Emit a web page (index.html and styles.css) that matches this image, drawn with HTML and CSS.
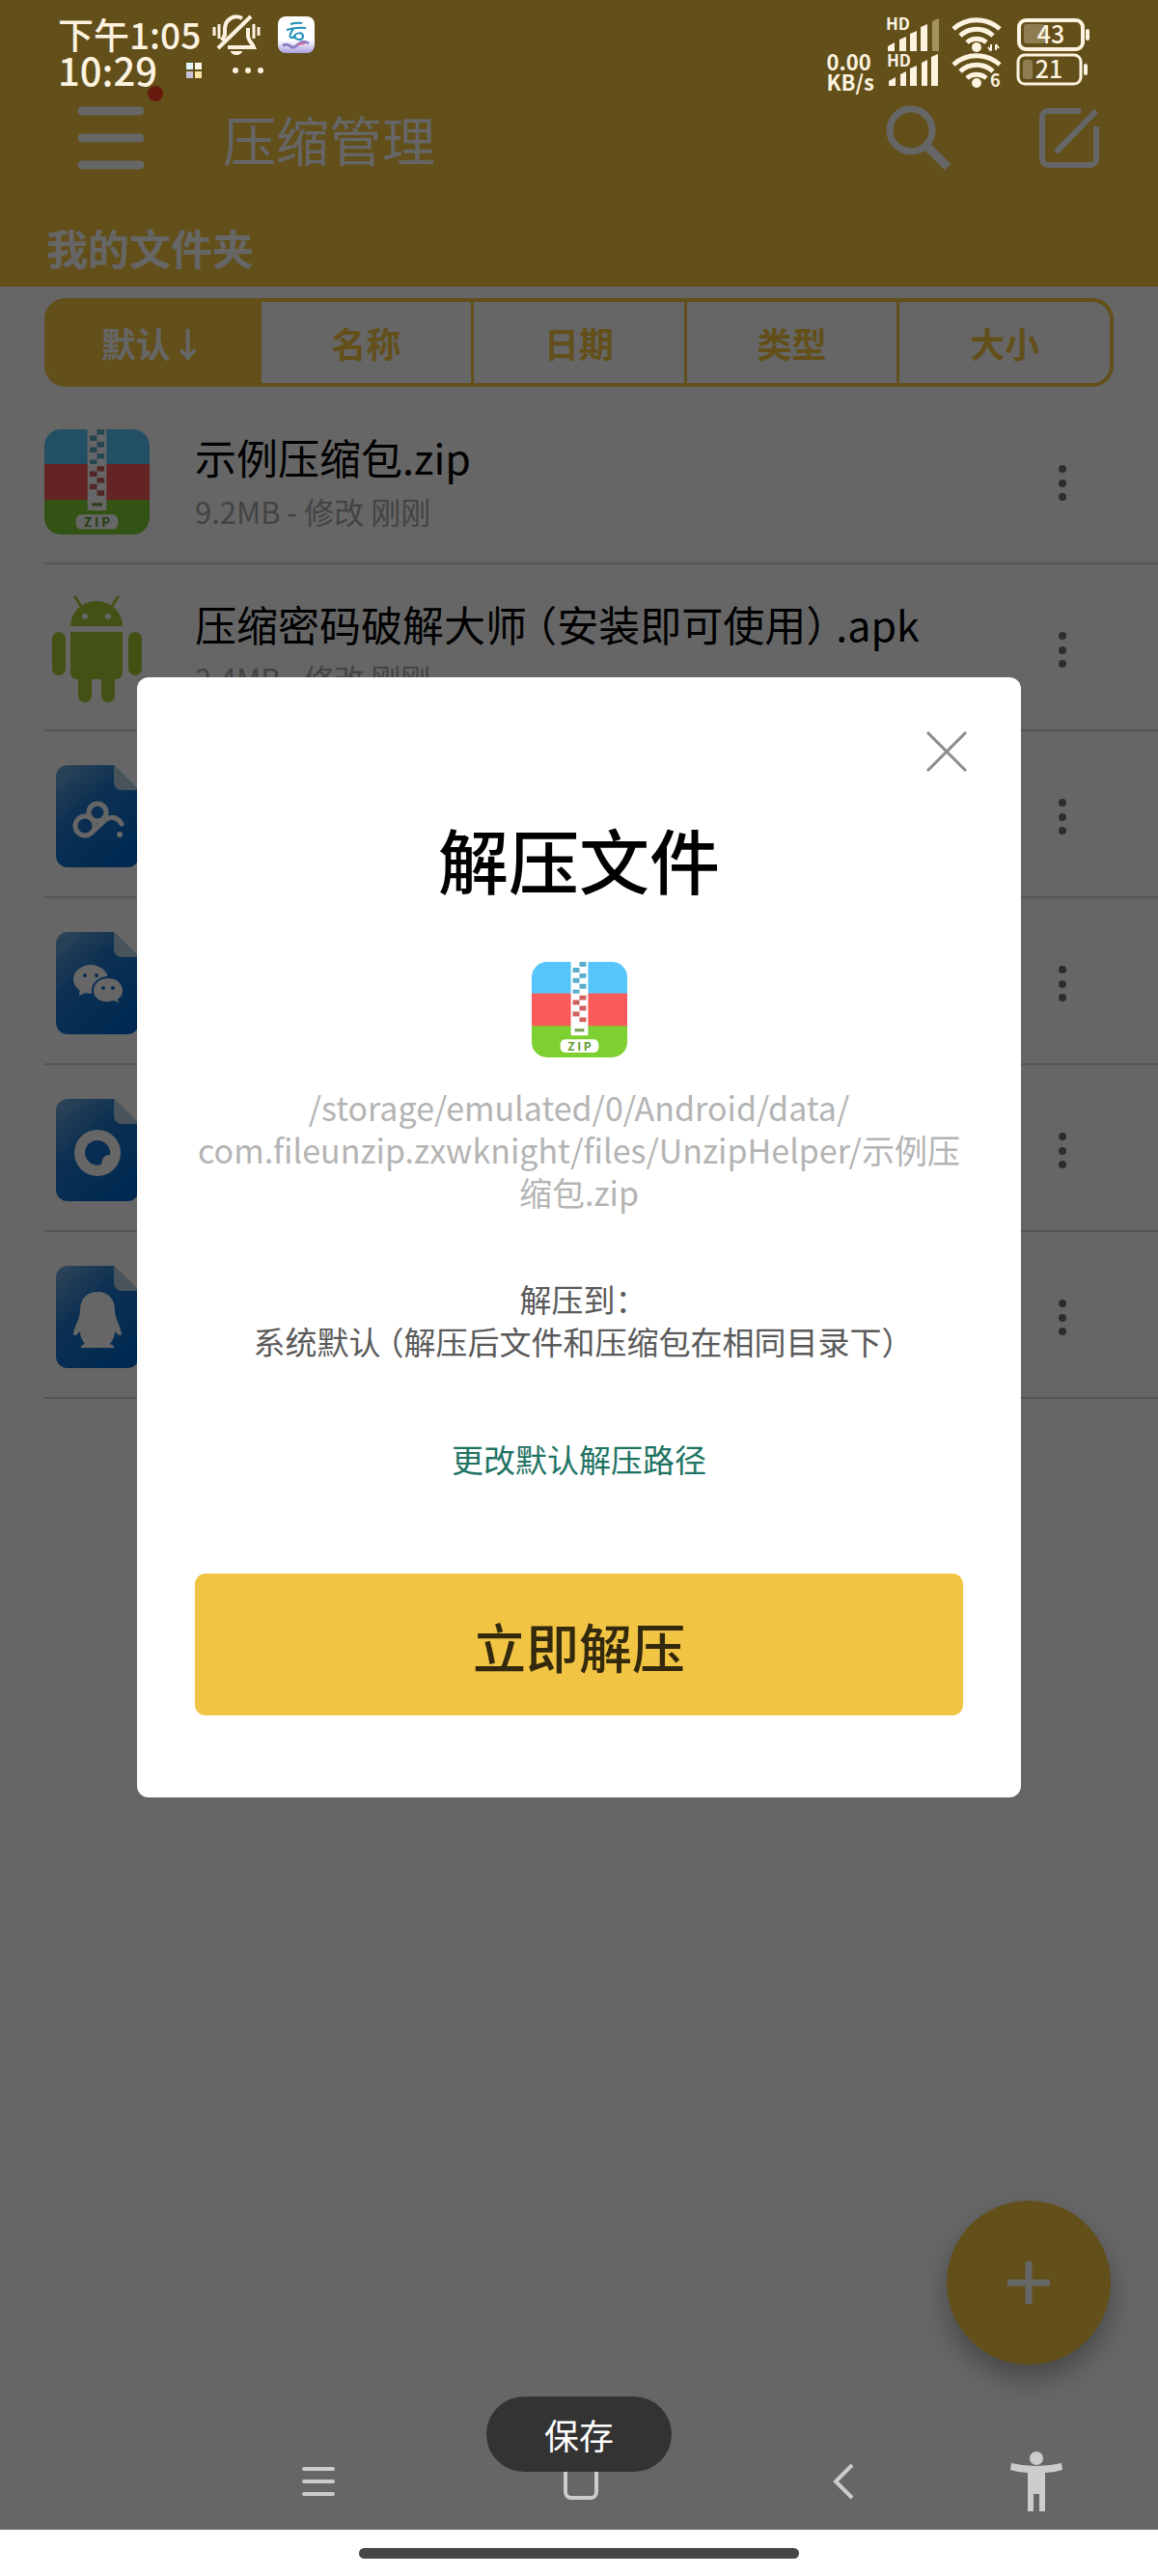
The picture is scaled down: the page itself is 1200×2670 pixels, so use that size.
FILE: index.html
```html
<!DOCTYPE html>
<html lang="zh-CN">
<head>
<meta charset="utf-8">
<meta name="viewport" content="width=device-width, initial-scale=1">
<title>压缩管理</title>
<link rel="stylesheet" href="styles.css">
</head>
<body>
<svg class="sprite" aria-hidden="true">
  <defs>
    <linearGradient id="doc-fill" x1="0" y1="0" x2="0.7" y2="1">
      <stop offset="0" stop-color="#78aedc"/>
      <stop offset="0.45" stop-color="#1f78cc"/>
      <stop offset="1" stop-color="#0068cc"/>
    </linearGradient>
    <linearGradient id="app-fill" x1="0" y1="0" x2="0" y2="1">
      <stop offset="0.65" stop-color="#ffffff"/>
      <stop offset="1" stop-color="#a99fe0"/>
    </linearGradient>
    <clipPath id="zip-clip"><rect width="100" height="100" rx="16"/></clipPath>
    <symbol id="zip" viewBox="0 0 100 100">
      <g clip-path="url(#zip-clip)">
        <rect width="100" height="34" fill="#56c5fa"/>
        <rect y="33" width="100" height="35" fill="#fa5b5a"/>
        <rect y="67" width="100" height="33" fill="#7ed030"/>
      </g>
      <path d="M41 0h18v77H41z" fill="#fff"/>
      <path d="M50 0h7v5h-7zM43 6h7v5h-7zM50 12h7v5h-7zM43 17h7v5h-7zM50 23h7v5h-7zM43 29h7v4h-7z" fill="#5aaecb"/>
      <path d="M50 35h7v5h-7zM43 40h7v5h-7zM50 46h7v5h-7zM43 52h7v5h-7zM50 58h7v5h-7z" fill="#d0605f"/>
      <rect x="45" y="70" width="10" height="3" fill="#6f9f4a"/>
      <rect x="30" y="81" width="40" height="14" rx="5" fill="#fff"/>
      <text x="50" y="93" text-anchor="middle" class="zip-label">Z I P</text>
    </symbol>
    <symbol id="doc" viewBox="0 0 86 106">
      <path d="M12 0h48l26 26v68a12 12 0 0 1-12 12H12A12 12 0 0 1 0 94V12A12 12 0 0 1 12 0z" fill="url(#doc-fill)"/>
      <path d="M60 0l26 26H68a8 8 0 0 1-8-8z" fill="#b4cfe2"/>
    </symbol>
    <symbol id="wifi" viewBox="0 0 52 37">
      <g fill="none" stroke="#fdf3e0" stroke-width="5">
        <path d="M2 13a36 36 0 0 1 48 0"/>
        <path d="M9 20a25 25 0 0 1 34 0"/>
        <path d="M16 27a15 15 0 0 1 20 0"/>
      </g>
      <circle cx="26" cy="32" r="5" fill="#fdf3e0"/>
    </symbol>
    <symbol id="dots" viewBox="0 0 40 60">
      <circle cx="20" cy="16" r="4"/><circle cx="20" cy="31" r="4"/><circle cx="20" cy="45" r="4"/>
    </symbol>
  </defs>
</svg>

<div class="screen">
  <main class="app">
    <header class="header">
      <div class="toolbar">
        <button class="icon-button menu-button" aria-label="菜单">
          <svg width="70" height="66" viewBox="0 0 70 66" fill="none" stroke="#fff" stroke-width="9" stroke-linecap="round"><path d="M5 5h60M5 33h60M5 61h60"/></svg>
          <span class="red-dot"></span>
        </button>
        <h1 class="app-title">压缩管理</h1>
        <button class="icon-button" aria-label="搜索">
          <svg width="68" height="68" viewBox="0 0 68 68" fill="none" stroke="#fff"><circle cx="26" cy="26" r="22" stroke-width="7"/><path d="M42 42l22 22" stroke-width="9"/></svg>
        </button>
        <button class="icon-button" aria-label="编辑">
          <svg width="62" height="62" viewBox="0 0 62 62" fill="none" stroke="#fff" stroke-width="6"><path d="M43 3H9a6 6 0 0 0-6 6v44a6 6 0 0 0 6 6h44a6 6 0 0 0 6-6V19M17 46L59 3"/></svg>
        </button>
      </div>
      <h2 class="folder-title">我的文件夹</h2>
    </header>

    <div class="sort">
      <button class="sort-item selected">默认↓</button>
      <button class="sort-item">名称</button>
      <button class="sort-item">日期</button>
      <button class="sort-item">类型</button>
      <button class="sort-item">大小</button>
    </div>

    <ul class="files">
      <li class="file">
        <div class="file-icon"><svg width="109" height="109"><use href="#zip"/></svg></div>
        <div class="file-text">
          <div class="file-name">示例压缩包.zip</div>
          <div class="file-info">9.2MB - 修改 刚刚</div>
        </div>
        <button class="more" aria-label="更多"><svg width="40" height="60"><use href="#dots"/></svg></button>
      </li>
      <li class="file">
        <div class="file-icon">
          <svg width="93" height="110" viewBox="0 0 93 110" fill="#a9cc33">
            <path d="M19 31a27 26 0 0 1 54 0zM19 37h54v43a6 6 0 0 1-6 6H25a6 6 0 0 1-6-6z"/>
            <rect y="37" width="14" height="45" rx="7"/><rect x="79" y="37" width="14" height="45" rx="7"/>
            <rect x="27" y="76" width="14" height="34" rx="7"/><rect x="51" y="76" width="14" height="34" rx="7"/>
            <path d="M24 1l7 11M68 1l-7 11" stroke="#a9cc33" stroke-width="3" stroke-linecap="round"/>
            <circle cx="34" cy="21" r="3" fill="#fff"/><circle cx="58" cy="21" r="3" fill="#fff"/>
          </svg>
        </div>
        <div class="file-text">
          <div class="file-name">压缩密码破解大师 （安装即可使用） .apk</div>
          <div class="file-info">2.4MB - 修改 刚刚</div>
        </div>
        <button class="more" aria-label="更多"><svg width="40" height="60"><use href="#dots"/></svg></button>
      </li>
      <li class="file">
        <div class="file-icon">
          <svg width="86" height="106" viewBox="0 0 86 106"><use href="#doc"/>
            <g fill="none" stroke="#fff" stroke-width="5" stroke-linecap="round"><circle cx="30" cy="63" r="10"/><circle cx="43" cy="49" r="9"/><path d="M37 70l14-13q10-7 17 4"/></g>
            <circle cx="66" cy="72" r="3" fill="#fff"/>
          </svg>
        </div>
        <button class="more" aria-label="更多"><svg width="40" height="60"><use href="#dots"/></svg></button>
      </li>
      <li class="file">
        <div class="file-icon">
          <svg width="86" height="106" viewBox="0 0 86 106"><use href="#doc"/>
            <g fill="#fff"><ellipse cx="36" cy="49" rx="18" ry="15"/><path d="M25 58l-1 8 9-4z"/>
            <path d="M54 47c9 0 16 6 16 14 0 4-2 7-5 9l1 5-6-3c-14 4-22-3-22-11s7-14 16-14z" stroke="#1670cc" stroke-width="2"/></g>
            <g fill="#1670cc"><circle cx="30" cy="45" r="2"/><circle cx="42" cy="45" r="2"/><circle cx="49" cy="58" r="2"/><circle cx="59" cy="58" r="2"/></g>
          </svg>
        </div>
        <button class="more" aria-label="更多"><svg width="40" height="60"><use href="#dots"/></svg></button>
      </li>
      <li class="file">
        <div class="file-icon">
          <svg width="86" height="106" viewBox="0 0 86 106"><use href="#doc"/>
            <circle cx="43" cy="56" r="24" fill="#fff"/><path d="M43 43a13 13 0 0 1 13 15c-6 0-8 3-9 10a13 13 0 0 1-17-12 13 13 0 0 1 13-13z" fill="#1670cc"/>
          </svg>
        </div>
        <button class="more" aria-label="更多"><svg width="40" height="60"><use href="#dots"/></svg></button>
      </li>
      <li class="file">
        <div class="file-icon">
          <svg width="86" height="106" viewBox="0 0 86 106"><use href="#doc"/>
            <path d="M43 27c12 0 18 8 18 19 0 9 6 16 7 25-2 3-5-1-7-3 0 6-3 10-5 13 3 1 5 3 4 4H26c-1-2 1-3 4-4-3-4-5-8-5-13-2 2-5 6-7 3 1-9 7-16 7-25 0-11 6-19 18-19z" fill="#fff"/>
          </svg>
        </div>
        <button class="more" aria-label="更多"><svg width="40" height="60"><use href="#dots"/></svg></button>
      </li>
    </ul>
  </main>

  <button class="fab" aria-label="添加">
    <svg width="44" height="44" viewBox="0 0 44 44" stroke="#fff" stroke-width="7"><path d="M22 0v44M0 22h44"/></svg>
  </button>

  <div class="scrim">
    <section class="dialog" role="dialog" aria-labelledby="dialog-title">
      <button class="icon-button close" aria-label="关闭">
        <svg width="44" height="44" viewBox="0 0 44 44" stroke="#8c8c8c" stroke-width="3"><path d="M2 2l40 40M42 2L2 42"/></svg>
      </button>
      <h2 class="dialog-title" id="dialog-title">解压文件</h2>
      <svg class="dialog-icon" width="99" height="99"><use href="#zip"/></svg>
      <p class="path">/storage/emulated/0/Android/data/<br>com.fileunzip.zxwknight/files/UnzipHelper/示例压<br>缩包.zip</p>
      <p class="target">解压到：&nbsp;<br>系统默认 （解压后文件和压缩包在相同目录下）&nbsp;</p>
      <a class="change" href="#">更改默认解压路径</a>
      <button class="extract">立即解压</button>
    </section>
  </div>

  <div class="status">
    <div class="status-row">
      <span class="clock">下午1:05</span>
      <svg class="bell" width="50" height="42" viewBox="0 0 50 42" fill="none" stroke="#fdf3e0" stroke-width="3">
        <path d="M31 4C22 -1 13 6 13 15v6l-3 6M37 14v8c0 5 4 7 6 12H16" stroke-width="4"/><path d="M6 35L40 2" stroke-width="4"/>
        <path d="M2 13v9M7 10v15M43 10v15M48 13v9"/>
        <path d="M19 38h12a6 4 0 0 1-12 0z" fill="#fdf3e0" stroke="none"/>
      </svg>
      <svg class="app-badge" width="38" height="38" viewBox="0 0 38 38">
        <rect width="38" height="38" rx="8" fill="url(#app-fill)"/>
        <path d="M13 8q7-2 12-1M9 14q10-3 20-2M16 13q-7 10 0 9c2-6 11-6 10-1s-10 3-8-1" fill="none" stroke="#1f8fb5" stroke-width="2"/>
        <path d="M5 30q5-2 8 1t8-2 11-1" fill="none" stroke="#8a7fc4" stroke-width="3"/>
        <path d="M20 29l8-1" stroke="#d86a9a" stroke-width="2"/>
      </svg>
      <div class="indicators">
        <svg width="56" height="37" viewBox="0 0 56 37">
          <text class="hd" x="0" y="14">HD</text>
          <path d="M2 36v-5l7-4v9zM14 36V24l7-3v15zM25 36V18l7-3v21zM36 36V11l7-3v28z" fill="#fdf3e0"/><path d="M48 36V5l7-3v34z" fill="#a3925f"/>
        </svg>
        <svg width="52" height="37"><use href="#wifi"/><path d="M41 29v6M38 32l3 4M46 35v-6M46 29l3 4" stroke="#fdf3e0" stroke-width="2"/></svg>
        <svg class="battery" width="76" height="37" viewBox="0 0 76 37">
          <rect x="7" y="8" width="22" height="20" rx="3" fill="#8d7d50"/>
          <rect x="2" y="4" width="66" height="30" rx="7" fill="none" stroke="#fdf3e0" stroke-width="4"/>
          <rect x="71" y="13" width="4" height="12" rx="2" fill="#fdf3e0"/>
          <text class="level" x="35" y="28" text-anchor="middle">43</text>
        </svg>
      </div>
    </div>
    <div class="status-row">
      <span class="clock second">10:29</span>
      <svg class="tiles" width="16" height="16" viewBox="0 0 16 16"><path d="M0 0h7v7H0z" fill="#dff4fb"/><path d="M9 0h7v7H9z" fill="#fdf7ea"/><path d="M0 9h7v7H0z" fill="#c9c2d8"/><path d="M9 9h7v7H9z" fill="#fbe3a4"/></svg>
      <svg class="ellipsis" width="32" height="8" viewBox="0 0 32 8" fill="#fdf3e0"><circle cx="3" cy="4" r="3"/><circle cx="16" cy="4" r="3"/><circle cx="29" cy="4" r="3"/></svg>
      <div class="indicators">
        <span class="speed">0.00<br>KB/s</span>
        <svg width="56" height="37" viewBox="0 0 56 37">
          <text class="hd" x="1" y="15">HD</text>
          <path d="M3 35v-5l7-4v9zM15 35V23l6-3v15zM25 35V17l7-3v21zM37 35V11l6-3v27zM47 35V5l7-3v33z" fill="#fdf3e0"/>
        </svg>
        <svg width="52" height="37"><use href="#wifi"/><text class="wifi-gen" x="40" y="36">6</text></svg>
        <svg class="battery" width="76" height="37" viewBox="0 0 76 37">
          <rect x="6" y="8" width="10" height="20" rx="3" fill="#8d7d50"/>
          <rect x="1" y="3" width="65" height="30" rx="7" fill="none" stroke="#fdf3e0" stroke-width="3"/>
          <rect x="69" y="12" width="4" height="12" rx="2" fill="#fdf3e0"/>
          <text class="level" x="33" y="27" text-anchor="middle">21</text>
        </svg>
      </div>
    </div>
  </div>

  <nav class="system-nav">
    <div class="nav-keys">
      <button class="icon-button" aria-label="最近任务"><svg width="36" height="64" viewBox="0 0 36 64" stroke="#ccc" stroke-width="4" stroke-linecap="round"><path d="M3 19h30M3 32h30M3 45h30"/></svg></button>
      <button class="icon-button" aria-label="主屏幕"><svg width="36" height="64" viewBox="0 0 36 64" fill="none" stroke="#ccc" stroke-width="4"><rect x="2" y="15" width="32" height="34" rx="6"/></svg></button>
      <button class="icon-button" aria-label="返回"><svg width="36" height="64" viewBox="0 0 36 64" fill="none" stroke="#ccc" stroke-width="4"><path d="M27 15L10 32l17 17"/></svg></button>
    </div>
    <button class="icon-button" aria-label="无障碍"><svg width="56" height="64" viewBox="0 0 56 64" fill="#ccc"><circle cx="28" cy="8" r="7"/><path d="M2 13q26 6 52 0l1 7q-9 3-18 3v40h-6V45h-6v18h-6V23q-9 0-18-3z"/></svg></button>
  </nav>

  <button class="toast">保存</button>
</div>
<footer class="gesture"><div class="gesture-bar"></div></footer>
</body>
</html>
```
FILE: styles.css
```css
* {
  box-sizing: border-box;
}

body {
  display: flex;
  flex-direction: column;
  min-height: 100vh;
  margin: 0;
  background: #fff;
  color: #000;
  font-family: "Noto Sans CJK SC", "Noto Sans", sans-serif;
}

h1,
h2,
p,
ul {
  margin: 0;
  padding: 0;
}

svg {
  display: block;
  flex: none;
  overflow: visible;
}

button {
  padding: 0;
  border: 0;
  background: none;
  font-family: inherit;
  cursor: pointer;
}

.sprite {
  position: absolute;
  width: 0;
  height: 0;
}

/* Layers of the screen share one grid cell and stack in source order */

.screen {
  display: grid;
  flex: 1;
  grid-template-columns: minmax(0, 1fr);
}

.screen > * {
  position: relative;
  grid-area: 1 / 1;
}

/* App page */

.header {
  padding: 91px 61px 0 48px;
  background: #f4c542;
  color: #fff;
}

.toolbar {
  display: flex;
  align-items: center;
  gap: 91px;
  height: 104px;
  padding-left: 32px;
}

.menu-button {
  position: relative;
}

.red-dot {
  position: absolute;
  top: -21px;
  right: -19px;
  width: 16px;
  height: 16px;
  border-radius: 50%;
  background: #ff4020;
}

.app-title {
  flex: 1;
  margin-left: -10px;
  font-size: 55px;
  font-weight: 400;
  line-height: 80px;
}

.folder-title {
  padding: 23px 0 3px;
  font-size: 43px;
  font-weight: 700;
  line-height: 76px;
}

.sort {
  display: flex;
  margin: 12px 46px 11px;
  overflow: hidden;
  border: 4px solid #f4c542;
  border-radius: 22px;
}

.sort-item {
  flex: 1;
  height: 84px;
  color: #f4c542;
  font-size: 36px;
  font-weight: 700;
}

.sort-item + .sort-item {
  border-left: 3px solid #f4c542;
}

.sort-item.selected {
  background: #f4c542;
  color: #fff;
}

.files {
  padding-left: 46px;
  list-style: none;
}

.file {
  display: flex;
  align-items: center;
  gap: 47px;
  height: 173px;
  padding: 4px 79px 0 0;
  border-bottom: 2px solid #d8d8d8;
}

.file-icon {
  display: flex;
  justify-content: center;
  width: 109px;
}

.file-name {
  font-size: 43px;
  font-feature-settings: "halt";
  line-height: 60px;
}

.file-info {
  color: #a8a8a8;
  font-size: 31px;
  line-height: 54px;
}

.more {
  margin-left: auto;
  fill: #707070;
}

.fab {
  display: flex;
  align-items: center;
  align-self: end;
  justify-content: center;
  justify-self: end;
  width: 170px;
  height: 170px;
  margin: 0 49px 171px;
  border-radius: 50%;
  background: #f4c542;
  box-shadow: 0 14px 28px rgba(0, 0, 0, 0.3);
}

/* Dialog */

.scrim {
  display: flex;
  align-items: center;
  justify-content: center;
  padding: 0 142px 57px;
  background: rgba(0, 0, 0, 0.6);
}

.dialog {
  display: flex;
  flex: 1;
  flex-direction: column;
  align-items: center;
  padding: 55px 55px 85px;
  border-radius: 12px;
  background: #fff;
  text-align: center;
}

.close {
  align-self: flex-end;
}

.dialog-title {
  margin-top: 48px;
  font-size: 73px;
  font-weight: 500;
  line-height: 80px;
}

.dialog-icon {
  margin-top: 68px;
}

.path,
.target,
.change {
  font-size: 33px;
  line-height: 44px;
}

.path {
  margin-top: 30px;
  color: #b4b4b4;
  font-size: 34px;
}

.target {
  margin-top: 66px;
  color: #5a5a5a;
  font-feature-settings: "halt";
}

.change {
  margin-top: 78px;
  color: #1f7363;
  text-decoration: none;
}

.extract {
  align-self: stretch;
  height: 147px;
  margin: 97px 5px 0;
  border-radius: 11px;
  background: #f2c443;
  color: #33290c;
  font-size: 55px;
  font-weight: 500;
}

/* System bars */

.status {
  align-self: start;
  padding: 17px 70px 0 60px;
  color: #fdf3e0;
}

.status-row {
  display: flex;
  align-items: center;
  height: 37px;
}

.clock {
  width: 160px;
  font-size: 37px;
  font-weight: 500;
  line-height: 37px;
  white-space: nowrap;
}

.clock.second {
  width: 133px;
  font-size: 40px;
}

.app-badge {
  margin-left: 18px;
}

.ellipsis {
  margin-left: 32px;
}

.indicators {
  display: flex;
  align-items: center;
  gap: 12px;
  margin-left: auto;
}

.battery {
  margin-left: 4px;
}

.speed {
  height: 40px;
  font-size: 22px;
  font-weight: 700;
  line-height: 21px;
}

.hd {
  fill: #fdf3e0;
  font-size: 17px;
  font-weight: 700;
}

.level {
  fill: #fdf3e0;
  font-size: 25px;
  font-weight: 500;
}

.wifi-gen {
  fill: #fdf3e0;
  font-size: 18px;
  font-weight: 700;
}

.zip-label {
  fill: #5d9a2c;
  font-size: 12px;
  font-weight: 700;
}

.system-nav {
  display: flex;
  align-items: center;
  align-self: end;
  gap: 154px;
  padding: 0 98px 18px 312px;
}

.nav-keys {
  display: flex;
  flex: 1;
  justify-content: space-between;
}

.toast {
  align-self: end;
  justify-self: center;
  height: 78px;
  margin-bottom: 60px;
  padding: 0 60px;
  border-radius: 39px;
  background: #333;
  color: #fff;
  font-size: 36px;
}

.gesture {
  display: flex;
  justify-content: center;
  height: 48px;
  padding-top: 19px;
  background: #fff;
}

.gesture-bar {
  width: 38%;
  height: 11px;
  border-radius: 6px;
  background: #474747;
}
```
